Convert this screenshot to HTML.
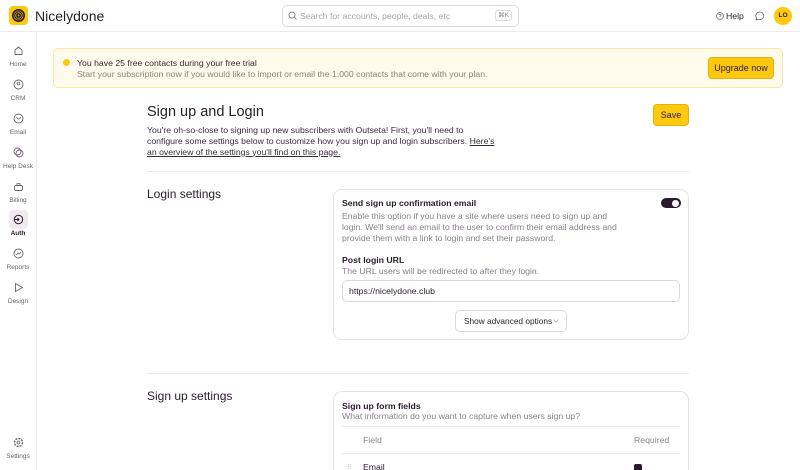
<!DOCTYPE html>
<html><head><meta charset="utf-8"><style>
*{box-sizing:border-box;margin:0;padding:0}
html,body{width:800px;height:470px;overflow:hidden}
body{background:#fff;font-family:"Liberation Sans",sans-serif;color:#2a1a2e;position:relative}
.a{position:absolute}
.hdr{left:0;top:0;width:800px;height:32px;border-bottom:1px solid #eeeaee}
.side{left:0;top:32px;width:37px;height:438px;border-right:1px solid #eeeaee}
.ni{position:absolute;left:0;width:36px;text-align:center;font-size:6.5px;color:#6b5f6e}
.ni svg{display:block;margin:0 auto 5px}
.muted{color:#8a7f8c}
.card{border:1px solid #e6e2e6;border-radius:9px;background:#fff}
.btn{background:#fdc90f;border:1px solid #e3b30a;border-radius:4px;font-size:9px;color:#2a1a2e;text-align:center}
.t{font-size:8.7px}
</style></head><body>
<div class="a hdr"></div>
<div class="a" style="left:9px;top:6px;width:19px;height:19px;background:#fdc90f;border-radius:4px"></div>
<svg class="a" style="left:11px;top:8px" width="15" height="15" viewBox="0 0 15 15"><circle cx="7.5" cy="7.5" r="6.5" fill="#2a1a1e"/><circle cx="7.5" cy="7.5" r="4.6" fill="none" stroke="#c9a21a" stroke-width=".8"/><circle cx="7.5" cy="7.5" r="2.8" fill="none" stroke="#c9a21a" stroke-width=".8"/><circle cx="7.5" cy="7.5" r="1" fill="#c9a21a"/></svg>
<div class="a" style="left:35px;top:8px;font-size:14px;color:#2a1a2e">Nicelydone</div>
<div class="a" style="left:282px;top:5px;width:237px;height:22px;border:1px solid #ddd8dd;border-radius:5px"></div>
<svg class="a" style="left:288px;top:11px" width="9" height="9" viewBox="0 0 9 9"><circle cx="4" cy="4" r="3" fill="none" stroke="#8a7f8c" stroke-width="1"/><path d="M6.2 6.2L8.5 8.5" stroke="#8a7f8c"/></svg>
<div class="a" style="left:300px;top:11px;font-size:8.7px;color:#aaa2ab">Search for accounts, people, deals, etc</div>
<div class="a" style="left:495px;top:10px;width:17px;height:11px;border:1px solid #ddd8dd;border-radius:3px;font-size:6.5px;text-align:center;line-height:9px;color:#8a7f8c">⌘K</div>
<svg class="a" style="left:716px;top:12px" width="8" height="8" viewBox="0 0 8 8"><circle cx="4" cy="4" r="3.4" fill="none" stroke="#6b5f6e" stroke-width=".8"/><path d="M3 3.2a1 1 0 1 1 1 1v.6" fill="none" stroke="#6b5f6e" stroke-width=".7"/></svg>
<div class="a" style="left:726px;top:11px;font-size:8.7px">Help</div>
<svg class="a" style="left:755px;top:11px" width="10" height="10" viewBox="0 0 10 10"><path d="M5 1a4 3.8 0 1 1-2 7.2L1 9l.6-2A4 3.8 0 0 1 5 1z" fill="none" stroke="#6b5f6e" stroke-width=".8"/></svg>
<div class="a" style="left:774px;top:7px;width:18px;height:18px;border-radius:50%;background:#fdc90f;font-size:6.5px;font-weight:bold;text-align:center;line-height:18px">LO</div>

<div class="a side"></div>
<div class="ni" style="top:45px"><svg width="11" height="11" viewBox="0 0 11 11"><path d="M2 5L5.5 2 9 5v4.5H2z" fill="none" stroke="#6b5f6e" stroke-width=".9"/></svg>Home</div>
<div class="ni" style="top:79px"><svg width="11" height="11" viewBox="0 0 11 11"><circle cx="5.5" cy="5.5" r="4.5" fill="none" stroke="#6b5f6e" stroke-width=".9"/><circle cx="5.5" cy="4.5" r="1.4" fill="none" stroke="#6b5f6e" stroke-width=".8"/></svg>CRM</div>
<div class="ni" style="top:113px"><svg width="11" height="11" viewBox="0 0 11 11"><circle cx="5.5" cy="5.5" r="4.5" fill="none" stroke="#6b5f6e" stroke-width=".9"/><path d="M3 4l2.5 2L8 4" fill="none" stroke="#6b5f6e" stroke-width=".8"/></svg>Email</div>
<div class="ni" style="top:147px"><svg width="11" height="11" viewBox="0 0 11 11"><circle cx="4.5" cy="4.5" r="3.5" fill="none" stroke="#6b5f6e" stroke-width=".9"/><circle cx="6.5" cy="6.5" r="3.5" fill="none" stroke="#6b5f6e" stroke-width=".9"/></svg>Help Desk</div>
<div class="ni" style="top:181px"><svg width="11" height="11" viewBox="0 0 11 11"><rect x="1.5" y="4.5" width="8" height="5" rx="1.5" fill="none" stroke="#6b5f6e" stroke-width=".9"/><path d="M4 4V2.5h3V4" fill="none" stroke="#6b5f6e" stroke-width=".8"/></svg>Billing</div>
<div class="a" style="left:9px;top:210px;width:19px;height:19px;background:#eeeaee;border-radius:4px"></div>
<svg class="a" style="left:13px;top:214px" width="11" height="11" viewBox="0 0 11 11"><circle cx="5.5" cy="5.5" r="4.2" fill="none" stroke="#2a1a2e" stroke-width="1"/><path d="M1 5.5h5M4.5 4l1.5 1.5L4.5 7" fill="none" stroke="#2a1a2e" stroke-width="1"/></svg>
<div class="ni" style="top:230px;color:#2a1a2e;font-weight:bold">Auth</div>
<div class="ni" style="top:248px"><svg width="11" height="11" viewBox="0 0 11 11"><circle cx="5.5" cy="5.5" r="4.5" fill="none" stroke="#6b5f6e" stroke-width=".9"/><path d="M3 7l2-2 1.2 1.2L8 4" fill="none" stroke="#6b5f6e" stroke-width=".8"/></svg>Reports</div>
<div class="ni" style="top:282px"><svg width="11" height="11" viewBox="0 0 11 11"><path d="M2.5 1.5l7 4-7 4z" fill="none" stroke="#6b5f6e" stroke-width=".9"/></svg>Design</div>
<div class="ni" style="top:437px"><svg width="11" height="11" viewBox="0 0 11 11"><circle cx="5.5" cy="5.5" r="4" fill="none" stroke="#6b5f6e" stroke-width="1.4" stroke-dasharray="2 1.1"/><circle cx="5.5" cy="5.5" r="1.5" fill="none" stroke="#6b5f6e" stroke-width=".8"/></svg>Settings</div>

<div class="a" style="left:53px;top:48px;width:730px;height:40px;background:#fffaeb;border:1px solid #fbe7a6;border-radius:5px"></div>
<div class="a" style="left:63px;top:59px;width:7px;height:7px;border-radius:50%;background:#fdc90f"></div>
<div class="a t" style="left:77px;top:58px;color:#3a2a30">You have 25 free contacts during your free trial</div>
<div class="a t" style="left:77px;top:69px;color:#8f7f78">Start your subscription now if you would like to import or email the 1,000 contacts that come with your plan.</div>
<div class="a btn" style="left:708px;top:57px;width:66px;height:22px;line-height:20px">Upgrade now</div>

<div class="a" style="left:147px;top:104px;font-size:14.5px">Sign up and Login</div>
<div class="a btn" style="left:653px;top:104px;width:36px;height:22px;line-height:20px">Save</div>
<div class="a" style="left:147px;top:125px;width:350px;font-size:8.7px;line-height:10.8px;color:#3a2a3e">You're oh-so-close to signing up new subscribers with Outseta! First, you'll need to configure some settings below to customize how you sign up and login subscribers. <span style="text-decoration:underline">Here's an overview of the settings you'll find on this page.</span></div>
<div class="a" style="left:147px;top:171px;width:542px;height:1px;background:#eeeaee"></div>
<div class="a" style="left:147px;top:187px;font-size:12px">Login settings</div>

<div class="a card" style="left:333px;top:189px;width:356px;height:151px"></div>
<div class="a t" style="left:342px;top:198px;font-weight:bold">Send sign up confirmation email</div>
<div class="a" style="left:661px;top:198px;width:20px;height:10px;border-radius:5px;background:#2a1a2e"></div>
<div class="a" style="left:672px;top:199.5px;width:7px;height:7px;border-radius:50%;background:#fff"></div>
<div class="a muted t" style="left:342px;top:211px;width:285px;line-height:10.8px">Enable this option if you have a site where users need to sign up and login. We'll send an email to the user to confirm their email address and provide them with a link to login and set their password.</div>
<div class="a t" style="left:342px;top:255px;font-weight:bold">Post login URL</div>
<div class="a muted t" style="left:342px;top:266px">The URL users will be redirected to after they login.</div>
<div class="a" style="left:342px;top:280px;width:338px;height:22px;border:1px solid #ddd8dd;border-radius:5px"></div>
<div class="a t" style="left:349px;top:286px">https://nicelydone.club</div>
<div class="a" style="left:455px;top:310px;width:112px;height:22px;border:1px solid #ddd8dd;border-radius:5px"></div>
<div class="a" style="left:464px;top:316px;font-size:8.3px">Show advanced options</div>
<svg class="a" style="left:553px;top:318px" width="6" height="5" viewBox="0 0 6 5"><path d="M.5 1.5L3 4 5.5 1.5" fill="none" stroke="#aaa" stroke-width=".7"/></svg>

<div class="a" style="left:147px;top:373px;width:542px;height:1px;background:#eeeaee"></div>
<div class="a" style="left:147px;top:389px;font-size:12px">Sign up settings</div>
<div class="a card" style="left:333px;top:391px;width:356px;height:100px"></div>
<div class="a t" style="left:342px;top:401px;font-weight:bold">Sign up form fields</div>
<div class="a muted t" style="left:342px;top:411px">What information do you want to capture when users sign up?</div>
<div class="a" style="left:342px;top:426px;width:338px;height:1px;background:#eeeaee"></div>
<div class="a muted t" style="left:363px;top:435px">Field</div>
<div class="a muted t" style="left:634px;top:435px">Required</div>
<div class="a" style="left:342px;top:453px;width:338px;height:1px;background:#eeeaee"></div>
<div class="a" style="left:347px;top:464px;font-size:6px;color:#bbb">⠿</div>
<div class="a t" style="left:363px;top:462px">Email</div>
<div class="a" style="left:634px;top:464px;width:8px;height:8px;border-radius:2px;background:#2a1a2e"></div>
</body></html>
